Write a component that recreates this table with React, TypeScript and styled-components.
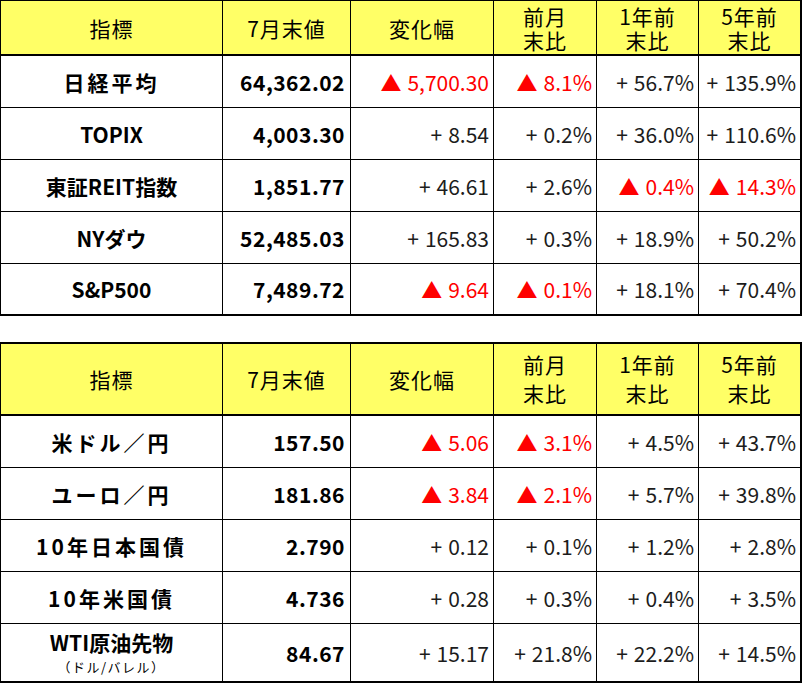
import React from "react";
import styled, { createGlobalStyle } from "styled-components";

const Global = createGlobalStyle`
  html, body { margin: 0; padding: 0; background: #ffffff; }
  body { font-family: "Noto Sans CJK JP", "Noto Sans", sans-serif; color: #000; }
`;

const Page = styled.div`
  width: 803px;
  display: flex;
  flex-direction: column;
  gap: 26px;
`;

const Grid = styled.div<{ $first?: boolean }>`
  display: grid;
  grid-template-columns: 222px 128px 143px 103px 102px 101px;
  width: 802px;
  box-sizing: border-box;
  border-left: 1px solid #000;
  border-top: ${(p) => (p.$first ? "1px" : "2px")} solid #000;
  border-right: 2px solid #000;
  border-bottom: 2px solid #000;
`;

const Cell = styled.div<{ $h: number; $last?: boolean; $lastCol?: boolean; $bottom?: number }>`
  box-sizing: border-box;
  height: ${(p) => p.$h}px;
  border-right: ${(p) => (p.$lastCol ? "0" : "1px solid #000")};
  border-bottom: ${(p) => (p.$last ? 0 : p.$bottom ?? 1)}px solid #000;
  display: flex;
  align-items: center;
  overflow: hidden;
  white-space: nowrap;
`;

const HeadCell = styled(Cell)<{ $lh: number }>`
  background: #ffff66;
  justify-content: center;
  text-align: center;
  font-size: 21px;
  line-height: ${(p) => p.$lh}px;
  letter-spacing: 1px;
  font-weight: 400;
`;

const LabelCell = styled(Cell)`
  flex-direction: column;
  justify-content: center;
  font-size: 21px;
  font-weight: 700;
  line-height: 26px;
`;

const LabelText = styled.span<{ $spaced?: boolean }>`
  letter-spacing: ${(p) => (p.$spaced ? "3px" : "0")};
`;

const SubLabel = styled.span`
  font-size: 13px;
  font-weight: 400;
  line-height: 18px;
  margin-top: 3px;
  letter-spacing: 1.5px;
`;

const ValueCell = styled(Cell)`
  justify-content: flex-end;
  padding-right: 5px;
  font-size: 21px;
  font-weight: 700;
  letter-spacing: 0.5px;
`;

const ChangeCell = styled(Cell)<{ $neg?: boolean }>`
  justify-content: flex-end;
  padding-right: 4px;
  font-size: 21px;
  font-weight: 400;
  color: ${(p) => (p.$neg ? "#ff0000" : "#1c1c1c")};
`;

const Sign = styled.span`
  margin-right: 6px;
`;

type Row = { label: string; sub?: string; spaced?: boolean; value: string; ch: string[] };

const table1: Row[] = [
  { label: "日経平均", spaced: true, value: "64,362.02", ch: ["-5,700.30", "-8.1%", "+56.7%", "+135.9%"] },
  { label: "TOPIX", value: "4,003.30", ch: ["+8.54", "+0.2%", "+36.0%", "+110.6%"] },
  { label: "東証REIT指数", value: "1,851.77", ch: ["+46.61", "+2.6%", "-0.4%", "-14.3%"] },
  { label: "NYダウ", value: "52,485.03", ch: ["+165.83", "+0.3%", "+18.9%", "+50.2%"] },
  { label: "S&P500", value: "7,489.72", ch: ["-9.64", "-0.1%", "+18.1%", "+70.4%"] },
];

const table2: Row[] = [
  { label: "米ドル／円", spaced: true, value: "157.50", ch: ["-5.06", "-3.1%", "+4.5%", "+43.7%"] },
  { label: "ユーロ／円", spaced: true, value: "181.86", ch: ["-3.84", "-2.1%", "+5.7%", "+39.8%"] },
  { label: "10年日本国債", spaced: true, value: "2.790", ch: ["+0.12", "+0.1%", "+1.2%", "+2.8%"] },
  { label: "10年米国債", spaced: true, value: "4.736", ch: ["+0.28", "+0.3%", "+0.4%", "+3.5%"] },
  { label: "WTI原油先物", sub: "（ドル/バレル）", value: "84.67", ch: ["+15.17", "+21.8%", "+22.2%", "+14.5%"] },
];

const headers: string[][] = [["指標"], ["7月末値"], ["変化幅"], ["前月", "末比"], ["1年前", "末比"], ["5年前", "末比"]];

function Table({ rows, headH, headLh, lastH, first }: { rows: Row[]; headH: number; headLh: number; lastH: number; first?: boolean }) {
  return (
    <Grid $first={first}>
      {headers.map((h, i) => (
        <HeadCell key={i} $h={headH} $lh={headLh} $bottom={2} $lastCol={i === 5}>
          <span>
            {h.map((l, j) => (
              <React.Fragment key={j}>
                {j > 0 && <br />}
                {l}
              </React.Fragment>
            ))}
          </span>
        </HeadCell>
      ))}
      {rows.map((r, ri) => {
        const last = ri === rows.length - 1;
        const h = last ? lastH : 52;
        return (
          <React.Fragment key={ri}>
            <LabelCell $h={h} $last={last}>
              <LabelText $spaced={r.spaced}>{r.label}</LabelText>
              {r.sub && <SubLabel>{r.sub}</SubLabel>}
            </LabelCell>
            <ValueCell $h={h} $last={last}>{r.value}</ValueCell>
            {r.ch.map((c, ci) => {
              const neg = c.startsWith("-");
              return (
                <ChangeCell key={ci} $h={h} $last={last} $neg={neg} $lastCol={ci === 3}>
                  <Sign>{neg ? "▲" : "+"}</Sign>
                  {c.slice(1)}
                </ChangeCell>
              );
            })}
          </React.Fragment>
        );
      })}
    </Grid>
  );
}

export default function App() {
  return (
    <>
      <Global />
      <Page>
        <Table rows={table1} headH={55} headLh={24} lastH={50} first />
        <Table rows={table2} headH={72} headLh={29} lastH={57} />
      </Page>
    </>
  );
}
